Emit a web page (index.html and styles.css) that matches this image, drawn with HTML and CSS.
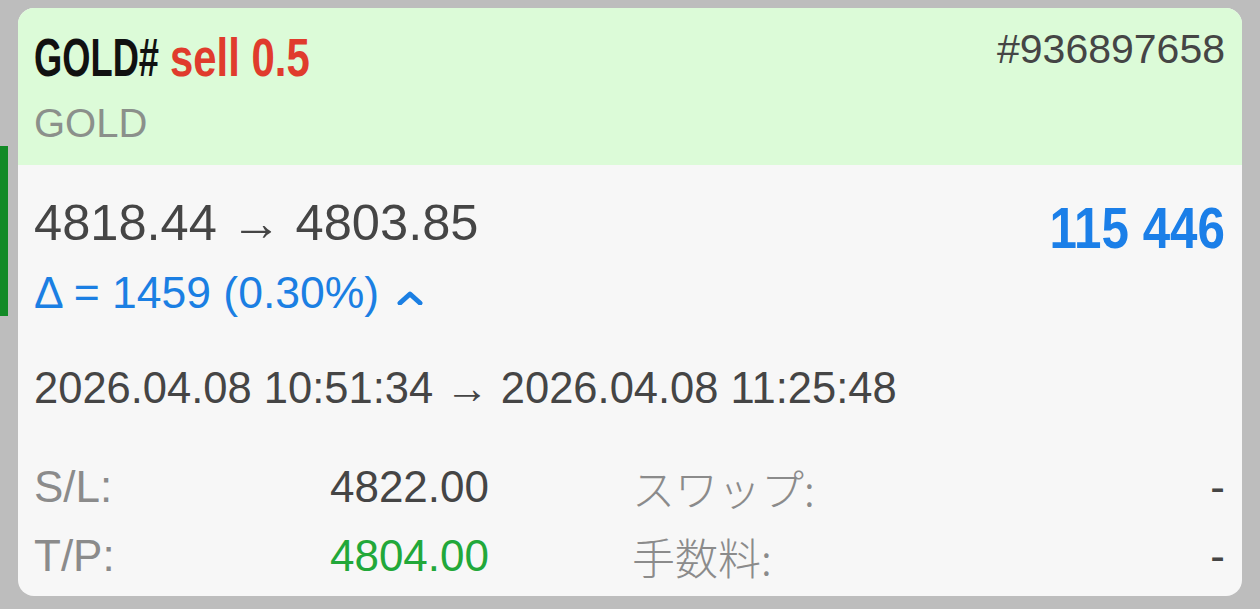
FILE: index.html
```html
<!DOCTYPE html>
<html lang="ja">
<head>
<meta charset="utf-8">
<title>GOLD# sell 0.5</title>
<link rel="stylesheet" href="styles.css">
</head>
<body>
<div class="screen">
  <div class="side-mark"></div>
  <div class="card">
    <div class="card-head">
      <div class="head-left">
        <div class="title"><span class="symbol"><span class="squeeze-caps">GOLD#</span></span><span class="side"><span class="squeeze-low">sell 0.5</span></span></div>
        <div class="subtitle">GOLD</div>
      </div>
      <div class="ticket">#936897658</div>
    </div>
    <div class="card-body">
      <div class="price-row">
        <div class="price-col">
          <div class="prices">4818.44 → 4803.85</div>
          <div class="delta">Δ = 1459 (0.30%)<svg class="chev" width="26" height="14" viewBox="0 0 26 14"><path d="M3 12 L13 3 L23 12" fill="none" stroke="currentColor" stroke-width="5" stroke-linecap="round" stroke-linejoin="round"/></svg></div>
        </div>
        <div class="profit">115 446</div>
      </div>
      <div class="times">2026.04.08 10:51:34 → 2026.04.08 11:25:48</div>
      <div class="stats">
        <div class="pair"><span class="lbl">S/L:</span><span class="val">4822.00</span></div>
        <div class="pair"><span class="lbl jp">スワップ:</span><span class="val">-</span></div>
        <div class="pair"><span class="lbl">T/P:</span><span class="val green">4804.00</span></div>
        <div class="pair"><span class="lbl jp">手数料:</span><span class="val">-</span></div>
      </div>
    </div>
  </div>
</div>
</body>
</html>
```

FILE: styles.css
```css
html, body {
  margin: 0;
  padding: 0;
}
body {
  width: 1260px;
  height: 609px;
  overflow: hidden;
  background: #bdbdbd;
  font-family: "Liberation Sans", Arial, "Noto Sans CJK JP", sans-serif;
}
.screen {
  position: relative;
  width: 1260px;
  height: 609px;
  padding: 8px 18px 0 18px;
  box-sizing: border-box;
}
.side-mark {
  position: absolute;
  left: 0;
  top: 146px;
  width: 8px;
  height: 170px;
  background: #128a26;
}
.card {
  height: 588px;
  border-radius: 16px;
  overflow: hidden;
  background: #f7f7f7;
  display: flex;
  flex-direction: column;
}
.card-head {
  height: 157px;
  box-sizing: border-box;
  background: #dcfbd8;
  padding: 17px 17px 0 16px;
  display: flex;
  justify-content: space-between;
  align-items: flex-start;
}
.title {
  margin-top: 3px;
  font-weight: bold;
  font-size: 53px;
  line-height: 60px;
  white-space: nowrap;
  display: flex;
  gap: 11px;
}
.symbol, .side {
  display: inline-block;
}
.symbol { color: #111111; width: 125px; }
.side { color: #e03b2d; width: 140px; }
.squeeze-caps, .squeeze-low {
  display: inline-block;
  transform-origin: left center;
}
.squeeze-caps { transform: scaleX(0.685); }
.squeeze-low { transform: scaleX(0.79); }
.subtitle {
  margin-top: 11px;
  font-size: 40px;
  line-height: 48px;
  color: #8b908b;
}
.ticket {
  font-size: 41px;
  line-height: 48px;
  color: #454545;
}
.card-body {
  flex: 1;
  padding: 29px 17px 0 16px;
}
.price-row {
  display: flex;
  justify-content: space-between;
  align-items: flex-start;
}
.prices {
  font-size: 50.6px;
  line-height: 58px;
  color: #454545;
  white-space: nowrap;
}
.delta {
  margin-top: 15px;
  font-size: 44.5px;
  line-height: 52px;
  color: #1b7fe3;
  display: flex;
  align-items: center;
  white-space: nowrap;
}
.chev {
  margin-left: 18px;
  margin-top: 10px;
}
.profit {
  margin-top: 2px;
  font-weight: bold;
  font-size: 57px;
  line-height: 64px;
  color: #1b7fe8;
  white-space: nowrap;
  transform: scaleX(0.865);
  transform-origin: right center;
}
.times {
  margin-top: 43px;
  font-size: 43.5px;
  line-height: 52px;
  color: #454545;
  white-space: nowrap;
}
.stats {
  margin-top: 47px;
  display: grid;
  grid-template-columns: 455px 1fr;
  column-gap: 143px;
  row-gap: 17px;
}
.pair {
  display: flex;
  justify-content: space-between;
  font-size: 44px;
  line-height: 52px;
}
.lbl { color: #8b8b8b; }
.jp { font-family: "Noto Sans CJK JP", "Liberation Sans", sans-serif; font-weight: 300; font-size: 43px; }
.val { color: #454545; }
.green { color: #22a83a; }
```
